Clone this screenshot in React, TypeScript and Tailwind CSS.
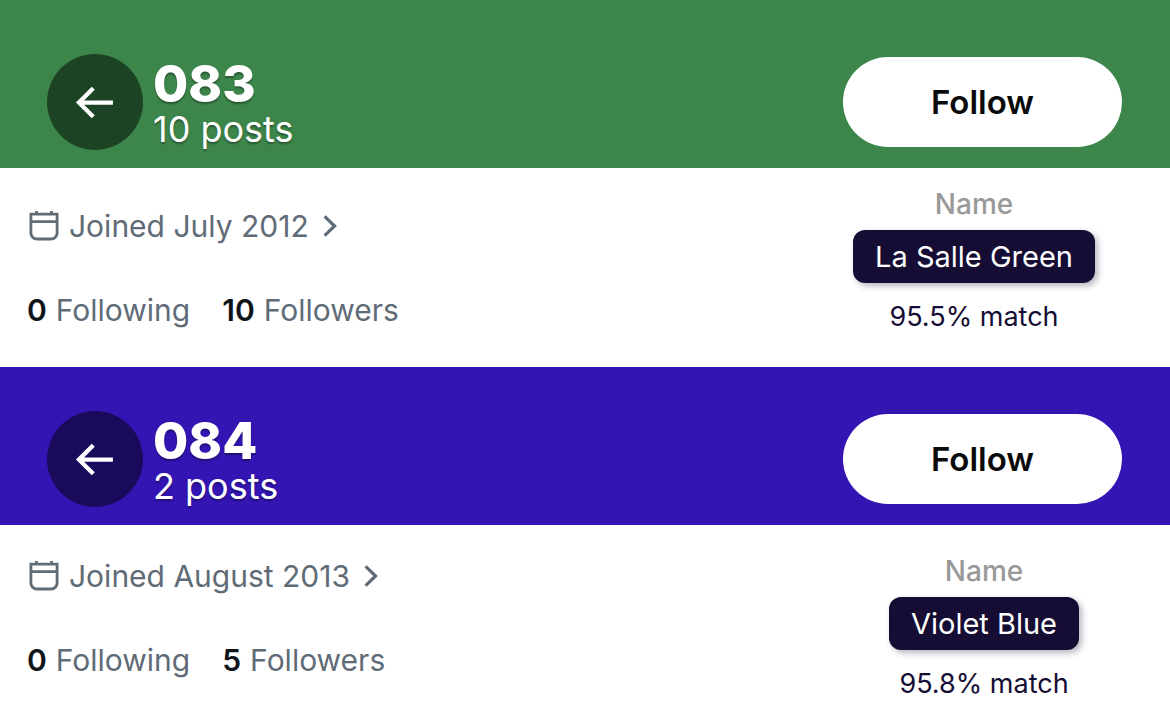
type Profile = {
  name: string;
  posts: string;
  joined: string;
  following: string;
  followers: string;
  color: string;
  match: string;
  headerClass: string;
  backClass: string;
  detailsClass: string;
  infoClass: string;
  colorClass: string;
};

const profiles: Profile[] = [
  {
    name: "083",
    posts: "10 posts",
    joined: "Joined July 2012",
    following: "0",
    followers: "10",
    color: "La Salle Green",
    match: "95.5% match",
    headerClass: "bg-[#3d864b] pt-[54px]",
    backClass: "bg-[#1c4424]",
    detailsClass: "pb-8",
    infoClass: "pt-10",
    colorClass: "mr-[66px] pt-5",
  },
  {
    name: "084",
    posts: "2 posts",
    joined: "Joined August 2013",
    following: "0",
    followers: "5",
    color: "Violet Blue",
    match: "95.8% match",
    headerClass: "bg-[#3415b3] pt-11",
    backClass: "bg-[#1a0a5c]",
    detailsClass: "pb-3",
    infoClass: "pt-[33px]",
    colorClass: "mr-14 pt-[30px]",
  },
];

function BackIcon() {
  return (
    <svg viewBox="0.8 0 24 24" className="size-[51px] fill-white" aria-hidden="true">
      <path d="M7.414 13l5.043 5.04-1.414 1.42L3.586 12l7.457-7.46 1.414 1.42L7.414 11H21v2H7.414z" />
    </svg>
  );
}

function CalendarIcon() {
  return (
    <svg viewBox="0 0 30 30" className="size-[30px] fill-none stroke-[#5f6b76]" strokeWidth="2.8" aria-hidden="true">
      <path d="M1.9 3.2H28.1V22A6 6 0 0 1 22.1 28H7.9A6 6 0 0 1 1.9 22ZM1.9 10.6H28.1" />
      <path d="M7.5 0V4M22.500 0V4" />
    </svg>
  );
}

function ChevronIcon() {
  return (
    <svg viewBox="0 0 14 22" className="ml-1 h-[22px] w-[14px] fill-none stroke-[#5f6b76]" strokeWidth="3.2" aria-hidden="true">
      <path d="M1.6 1.4L11.6 11L1.6 20.6" />
    </svg>
  );
}

function Stat({ value, label }: { value: string; label: string }) {
  return (
    <a href="#" className="flex gap-[9px]">
      <strong className="font-semibold text-[#0f1419]">{value}</strong>
      <span>{label}</span>
    </a>
  );
}

function ProfileCard({ profile }: { profile: Profile }) {
  return (
    <section>
      <header className={`flex items-center justify-between pr-12 pb-[18px] pl-[47px] text-white ${profile.headerClass}`}>
        <div className="flex items-center gap-[10px]">
          <button type="button" aria-label="Back" className={`flex size-24 items-center justify-center rounded-full ${profile.backClass}`}>
            <BackIcon />
          </button>
          <div className="pt-1 [text-shadow:0_2px_2px_rgba(0,0,0,0.35)]">
            <h2 className="text-[51px] leading-[50px] font-extrabold">{profile.name}</h2>
            <p className="text-[36px] leading-[40px]">{profile.posts}</p>
          </div>
        </div>
        <button type="button" className="h-[90px] w-[279px] rounded-full bg-white pt-px text-[33px] font-semibold text-[#0a0a0a]">
          Follow
        </button>
      </header>
      <div className={`flex items-start justify-between bg-white pl-[27px] ${profile.detailsClass}`}>
        <div className={`flex flex-col gap-12 text-[30px] leading-9 text-[#5f6b76] ${profile.infoClass}`}>
          <a href="#" className="flex items-center gap-[10px] pl-0.5">
            <CalendarIcon />
            <span>{profile.joined}</span>
            <ChevronIcon />
          </a>
          <div className="flex gap-8">
            <Stat value={profile.following} label="Following" />
            <Stat value={profile.followers} label="Followers" />
          </div>
        </div>
        <div className={`flex w-[260px] flex-col items-center text-[#150d33] ${profile.colorClass}`}>
          <p className="text-[28px] leading-8 font-medium text-[#999999]">Name</p>
          <p className="mt-[10px] rounded-xl bg-[#150d33] px-[22px] text-[29px] leading-[53px] text-white shadow-[3px_3px_6px_rgba(21,13,51,0.3)]">
            {profile.color}
          </p>
          <p className="mt-4 text-[27px] leading-9">{profile.match}</p>
        </div>
      </div>
    </section>
  );
}

export default function App() {
  return (
    <main className="min-h-screen bg-white font-['Inter',sans-serif] [font-optical-sizing:none]">
      {profiles.map((profile) => (
        <ProfileCard key={profile.name} profile={profile} />
      ))}
    </main>
  );
}
